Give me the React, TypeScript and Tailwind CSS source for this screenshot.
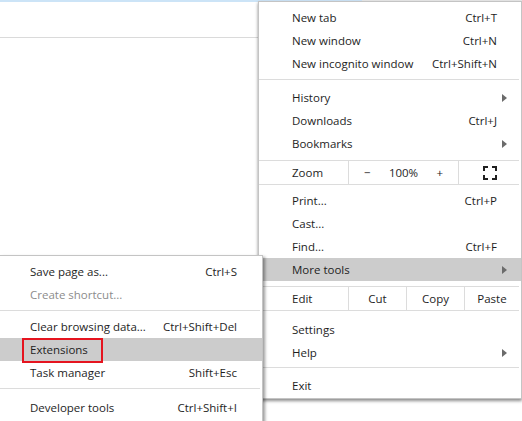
import type { ReactNode } from 'react';

const font = { fontFamily: '"Open Sans", "Noto Sans", sans-serif' };

function Arrow() {
  return (
    <svg width="5" height="8" viewBox="0 0 5 8" className="shrink-0">
      <path d="M0 0 L5 4 L0 8 Z" fill="#6b6b6b" />
    </svg>
  );
}

function FullscreenIcon() {
  return (
    <svg width="14" height="14" viewBox="0 0 14 14" fill="none" stroke="#202020" strokeWidth="2">
      <path d="M1 5 V1 H5" />
      <path d="M9 1 H13 V5" />
      <path d="M13 9 V13 H9" />
      <path d="M5 13 H1 V9" />
    </svg>
  );
}

interface RowProps {
  label: string;
  shortcut?: string;
  submenu?: boolean;
  highlight?: boolean;
  disabled?: boolean;
  indent: string;
  right: string;
}

function Row({ label, shortcut, submenu, highlight, disabled, indent, right }: RowProps) {
  return (
    <div
      className={`flex h-[23px] items-center justify-between ${indent} ${right} ${
        highlight ? 'bg-[#cccccc]' : ''
      } ${disabled ? 'text-[#8c8c8c]' : 'text-[#1e1e1e]'}`}
    >
      <span className="pt-[1px]">{label}</span>
      {shortcut && <span className="pt-[1px]">{shortcut}</span>}
      {submenu && (
        <span className="-mr-[13px] flex w-[8px] items-center">
          <Arrow />
        </span>
      )}
    </div>
  );
}

function Sep({ top, bottom }: { top: string; bottom: string }) {
  return <div className={`${top} ${bottom} mr-[2px] h-px bg-[#dcdcdc]`} />;
}

function Cell({ children, className = '' }: { children: ReactNode; className?: string }) {
  return <div className={`flex h-full items-center justify-center pt-[1px] ${className}`}>{children}</div>;
}

function MainMenu() {
  const m = { indent: 'pl-[33px]', right: 'pr-[24px]' };
  return (
    <div className="absolute left-[258px] top-[1px] w-[264px] border border-[#c4c4c4] bg-white pt-[4px] pb-[1px] text-[11.5px] shadow-[0_2px_3px_rgba(0,0,0,0.45)]">
      <Row label="New tab" shortcut="Ctrl+T" {...m} />
      <Row label="New window" shortcut="Ctrl+N" {...m} />
      <Row label="New incognito window" shortcut="Ctrl+Shift+N" {...m} />
      <Sep top="mt-[4px]" bottom="mb-[6px]" />
      <Row label="History" submenu {...m} />
      <Row label="Downloads" shortcut="Ctrl+J" {...m} />
      <Row label="Bookmarks" submenu {...m} />
      <div className="mt-[5px] mr-[2px] grid h-[25px] grid-cols-[89px_111px_1fr] border-y border-[#dcdcdc] text-[#1e1e1e]">
        <Cell className="justify-start pl-[33px]">Zoom</Cell>
        <div className="flex h-full items-center border-x border-[#dcdcdc] pt-[1px]">
          <span className="w-[37px] text-center">−</span>
          <span className="w-[37px] text-center">100%</span>
          <span className="w-[37px] text-center">+</span>
        </div>
        <Cell className="pl-[2px]">
          <FullscreenIcon />
        </Cell>
      </div>
      <div className="h-[4px]" />
      <Row label="Print..." shortcut="Ctrl+P" {...m} />
      <Row label="Cast..." {...m} />
      <Row label="Find..." shortcut="Ctrl+F" {...m} />
      <Row label="More tools" submenu highlight {...m} />
      <div className="mt-[5px] mr-[2px] grid h-[25px] grid-cols-[89px_58px_58px_1fr] border-y border-[#dcdcdc] text-[#1e1e1e]">
        <Cell className="justify-start pl-[33px]">Edit</Cell>
        <Cell className="border-l border-[#dcdcdc]">Cut</Cell>
        <Cell className="border-l border-[#dcdcdc]">Copy</Cell>
        <Cell className="border-l border-[#dcdcdc]">Paste</Cell>
      </div>
      <div className="h-[7px]" />
      <Row label="Settings" {...m} />
      <Row label="Help" submenu {...m} />
      <Sep top="mt-[3px]" bottom="mb-[6px]" />
      <Row label="Exit" {...m} />
    </div>
  );
}

function MoreToolsMenu() {
  const m = { indent: 'pl-[30px]', right: 'pr-[25px]' };
  return (
    <div className="absolute left-0 top-[255px] w-[263px] border-t border-r border-[#c4c4c4] bg-white pt-[4px] pb-[4px] text-[11.5px] shadow-[2px_2px_3px_rgba(0,0,0,0.4)]">
      <Row label="Save page as..." shortcut="Ctrl+S" {...m} />
      <Row label="Create shortcut..." disabled {...m} />
      <Sep top="mt-[4px]" bottom="mb-[4px]" />
      <Row label="Clear browsing data..." shortcut="Ctrl+Shift+Del" {...m} />
      <div className="relative">
        <Row label="Extensions" highlight {...m} />
        <div className="absolute left-[22px] top-0 h-[25px] w-[81px] border-2 border-[#e5141f]" />
      </div>
      <Row label="Task manager" shortcut="Shift+Esc" {...m} />
      <Sep top="mt-[4px]" bottom="mb-[7px]" />
      <Row label="Developer tools" shortcut="Ctrl+Shift+I" {...m} />
    </div>
  );
}

export default function App() {
  return (
    <div className="relative h-[421px] w-[522px] overflow-hidden bg-white" style={font}>
      <div className="flex h-[2px]">
        <div className="w-[362px] bg-[#cce4f7]" />
        <div className="flex-1 bg-[#e8e8e8]" />
      </div>
      <div className="h-[35px]" />
      <div className="h-px w-[258px] bg-[#dadada]" />
      <MainMenu />
      <MoreToolsMenu />
    </div>
  );
}
